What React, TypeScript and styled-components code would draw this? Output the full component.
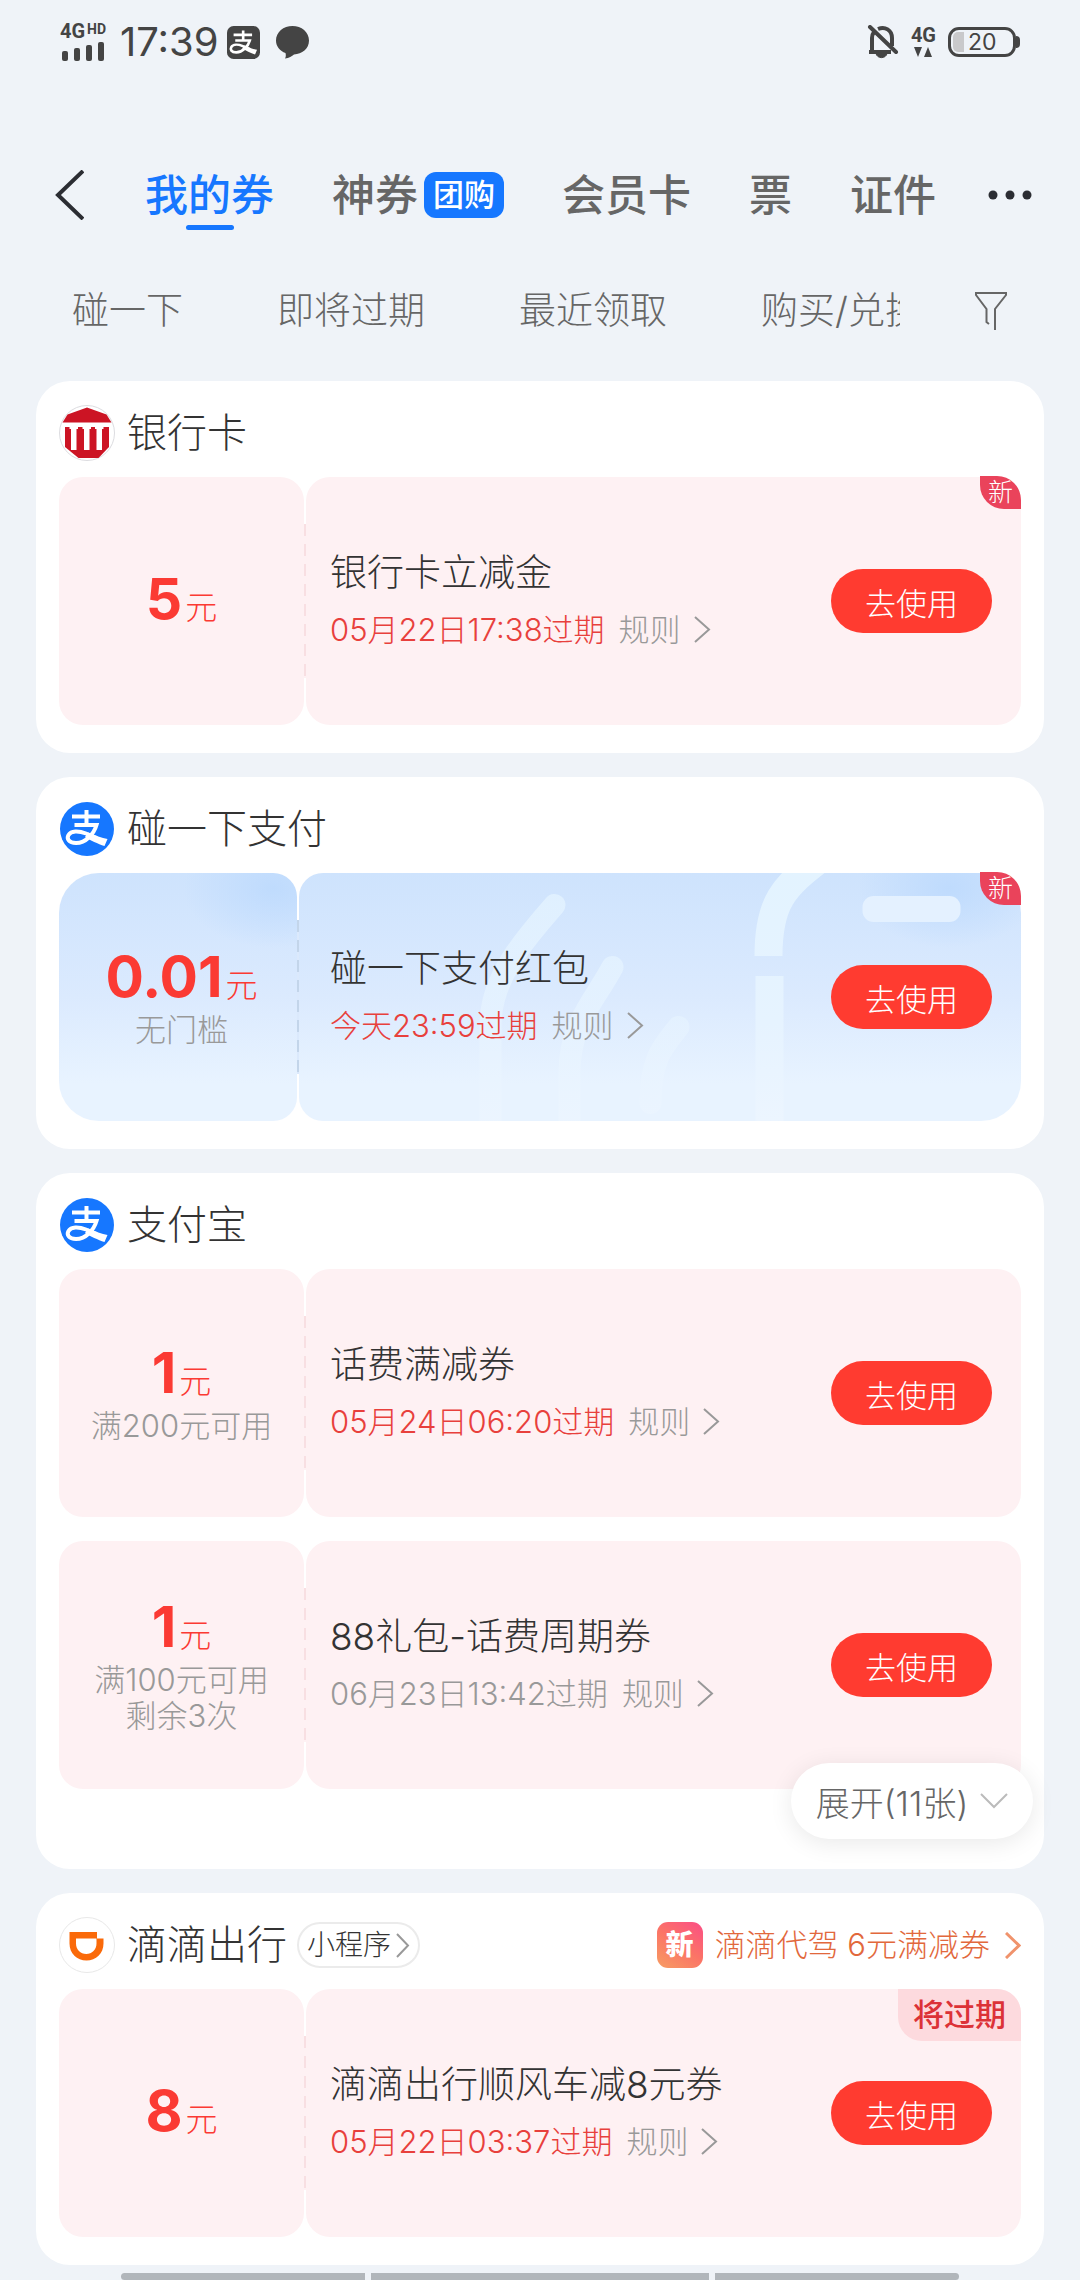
import React from "react";
import styled, { createGlobalStyle } from "styled-components";

const GlobalStyle = createGlobalStyle`
  *, *::before, *::after { box-sizing: border-box; }
  body {
    margin: 0;
    background: #eff3f8;
    color: #333;
    font-family: Inter, "Noto Sans CJK SC", sans-serif;
    font-weight: 300;
  }
  button {
    margin: 0;
    padding: 0;
    border: 0;
    background: none;
    color: inherit;
    font: inherit;
    cursor: pointer;
    white-space: nowrap;
  }
  a { color: inherit; text-decoration: none; }
  h2, h3, p { margin: 0; font-weight: inherit; }
  svg { display: block; flex: none; }
`;

/* ---------- status bar ---------- */

const StatusBar = styled.header`
  display: flex;
  align-items: center;
  justify-content: space-between;
  height: 84px;
  padding: 0 60px;
  color: #444;
`;

const StatusGroup = styled.div`
  display: flex;
  align-items: center;
`;

const Signal = styled.div`
  display: flex;
  flex-direction: column;
  gap: 2px;
  width: 60px;
`;

const NetworkLabel = styled.div`
  display: flex;
  align-items: flex-start;
  font-family: Roboto, sans-serif;
  font-size: 20px;
  font-weight: 700;
  line-height: 16px;
`;

const NetworkSup = styled.span`
  margin-left: 2px;
  font-size: 14px;
  line-height: 12px;
`;

const Clock = styled.time`
  margin-right: 8px;
  font-size: 40px;
  font-weight: 400;
  line-height: 48px;
`;

const AppIcons = styled.div`
  display: flex;
  align-items: center;
  gap: 16px;
`;

const DataNetwork = styled.div`
  display: flex;
  flex-direction: column;
  align-items: center;
  gap: 4px;
  margin: 0 12px;
  font-family: Roboto, sans-serif;
  font-size: 20px;
  font-weight: 700;
  line-height: 16px;
`;

const Battery = styled.div`
  display: flex;
  align-items: center;
`;

const BatteryBody = styled.div`
  display: flex;
  align-items: center;
  gap: 4px;
  width: 68px;
  height: 30px;
  padding: 2px;
  border: 3px solid #444;
  border-radius: 11px;
  font-size: 23px;
  font-weight: 400;
  line-height: 20px;
`;

const BatteryCharge = styled.span`
  width: 11px;
  height: 20px;
  border-radius: 5px 0 0 5px;
  background: #c9c9cb;
`;

const BatteryNub = styled.span`
  width: 4px;
  height: 12px;
  border-radius: 0 4px 4px 0;
  background: #444;
`;

/* ---------- navigation ---------- */

const TopNav = styled.nav`
  display: flex;
  align-items: center;
  justify-content: space-between;
  height: 90px;
  margin-top: 66px;
  padding: 0 48px 0 55px;
`;

const TabList = styled.div`
  display: flex;
  flex: 1;
  gap: 58px;
  margin-left: 61px;
`;

const Tab = styled.button<{ $active?: boolean }>`
  position: relative;
  display: flex;
  align-items: center;
  gap: 6px;
  color: ${(p) => (p.$active ? "#1677ff" : "#666")};
  font-size: 43px;
  font-weight: 500;
  line-height: 64px;

  &::after {
    content: "";
    display: ${(p) => (p.$active ? "block" : "none")};
    position: absolute;
    bottom: -3px;
    left: calc(50% - 24px);
    width: 48px;
    height: 5px;
    border-radius: 3px;
    background: #1677ff;
  }
`;

const TabTag = styled.span`
  padding: 0 9px;
  border-radius: 12px;
  background: #1677ff;
  color: #fff;
  font-size: 31px;
  line-height: 46px;
`;

const FilterBar = styled.div`
  display: flex;
  align-items: center;
  justify-content: space-between;
  height: 80px;
  margin-top: 31px;
  padding: 0 72px;
`;

const FilterList = styled.div`
  display: flex;
  flex: 1;
  gap: 94px;
  margin-right: 74px;
  overflow: hidden;
`;

const FilterItem = styled.button`
  flex: none;
  color: #666;
  font-size: 37px;
  line-height: 56px;
`;

/* ---------- cards ---------- */

const CardList = styled.main`
  display: flex;
  flex-direction: column;
  gap: 24px;
  padding: 30px 36px 8px;
`;

const Card = styled.section<{ $expandable?: boolean }>`
  position: relative;
  display: flex;
  flex-direction: column;
  gap: 24px;
  padding: 24px 23px ${(p) => (p.$expandable ? "80px" : "28px")};
  border-radius: 34px;
  background: #fff;
`;

const CardHeader = styled.div`
  display: flex;
  align-items: center;
  height: 56px;
  margin-bottom: -8px;
`;

const CardTitle = styled.h2`
  margin-left: 12px;
  font-size: 40px;
  line-height: 56px;
`;

const MiniProgram = styled.button`
  display: flex;
  align-items: center;
  gap: 5px;
  height: 46px;
  margin-left: 10px;
  padding: 0 8px;
  border: 2px solid #ebebeb;
  border-radius: 23px;
  font-size: 28px;
  line-height: 40px;
`;

const Promo = styled.a`
  display: flex;
  align-items: center;
  margin-left: auto;
  color: #e2683c;
  font-size: 31px;
  line-height: 46px;
`;

const PromoIcon = styled.span`
  width: 46px;
  margin-right: 12px;
  border-radius: 11px;
  background: linear-gradient(215deg, #fb4d86, #fb7466 50%, #f79d63);
  color: #fff;
  font-size: 28px;
  font-weight: 900;
  text-align: center;
`;

const PromoText = styled.span`
  margin-right: 15px;
`;

const CouponRow = styled.article`
  position: relative;
  display: flex;
  height: 248px;
`;

const pinkFill = "#fef1f3";
const blueFill = "linear-gradient(180deg, #cee3fd 0%, #dbeafe 50%, #e8f3ff 85%)";
const blueGlow =
  "radial-gradient(ellipse 90px 60px at 90% 6%, #bfdbfd 0%, rgba(191, 219, 253, 0) 100%)";

const ValuePanel = styled.div<{ $blue?: boolean }>`
  display: flex;
  flex: none;
  flex-direction: column;
  align-items: center;
  justify-content: center;
  width: ${(p) => (p.$blue ? "238px" : "245px")};
  padding-left: ${(p) => (p.$blue ? "7px" : "0")};
  border-radius: ${(p) => (p.$blue ? "40px 24px 24px 40px" : "24px")};
  background: ${(p) => (p.$blue ? `${blueGlow}, ${blueFill}` : pinkFill)};
`;

const Amount = styled.p`
  display: flex;
  align-items: baseline;
  gap: 3px;
  height: 66px;
  color: #fb3a33;
  font-family: "Liberation Sans Narrow", Inter, sans-serif;
  font-size: 57px;
  font-weight: 700;
  line-height: 62px;
`;

const Unit = styled.span`
  font-family: "Noto Sans CJK SC", sans-serif;
  font-size: 32px;
  font-weight: 300;
  line-height: 40px;
`;

const Condition = styled.p`
  color: #999;
  font-size: 31px;
  line-height: 36px;
`;

const Divider = styled.div<{ $blue?: boolean }>`
  align-self: center;
  width: 2px;
  height: 154px;
  background: repeating-linear-gradient(
    180deg,
    ${(p) => (p.$blue ? "#c3d5ea" : "#f8dfe2")} 0 12px,
    ${(p) => (p.$blue ? "#dbe9fc" : "#fef1f3")} 12px 20px
  );
`;

const DetailPanel = styled.div<{ $blue?: boolean }>`
  position: relative;
  display: flex;
  flex: 1;
  align-items: center;
  justify-content: space-between;
  padding: 0 29px 0 ${(p) => (p.$blue ? "31px" : "24px")};
  overflow: hidden;
  border-radius: ${(p) => (p.$blue ? "24px 40px 40px 24px" : "24px")};
  background: ${(p) => (p.$blue ? `${blueGlow}, ${blueFill}` : pinkFill)};
`;

const Pattern = styled.svg`
  position: absolute;
  inset: 0;
  width: 100%;
  height: 100%;
`;

const Details = styled.div`
  position: relative;
  display: flex;
  flex-direction: column;
  gap: 9px;
`;

const CouponTitle = styled.h3`
  font-size: 37px;
  line-height: 48px;
`;

const ExpiryLine = styled.div`
  display: flex;
  align-items: center;
  gap: 14px;
  font-size: 31px;
  line-height: 48px;
`;

const Expiry = styled.span<{ $muted?: boolean }>`
  color: ${(p) => (p.$muted ? "#999" : "#e8403c")};
`;

const Rules = styled.button`
  display: flex;
  align-items: center;
  gap: 13px;
  color: #999;
`;

const UseButton = styled.button`
  position: relative;
  width: 161px;
  height: 64px;
  border-radius: 32px;
  background: #ff3b30;
  color: #fff;
  font-size: 31px;
`;

const NewBadge = styled.span`
  position: absolute;
  top: -1px;
  right: 0;
  width: 41px;
  border-radius: 0 24px 0 24px;
  background: #ea435b;
  color: #fff;
  font-size: 25px;
  line-height: 33px;
  text-align: center;
`;

const ExpiringBadge = styled.span`
  position: absolute;
  top: 0;
  right: 0;
  padding: 0 15px;
  border-radius: 0 24px 0 24px;
  background: #fddade;
  color: #dc3237;
  font-size: 31px;
  font-weight: 500;
  line-height: 52px;
`;

const ExpandButton = styled.button`
  position: absolute;
  right: 11px;
  bottom: 30px;
  display: flex;
  align-items: center;
  justify-content: center;
  gap: 12px;
  width: 242px;
  height: 76px;
  border-radius: 38px;
  background: #fff;
  box-shadow: 0 4px 24px rgba(0, 0, 0, 0.09);
  color: #666;
  font-size: 34px;
`;

/* ---------- gesture bar ---------- */

const GestureBar = styled.footer`
  display: grid;
  grid-template-columns: 244fr 338fr 244fr;
  gap: 6px;
  padding: 0 121px;
`;

const GestureSegment = styled.span<{ $side?: "left" | "right" }>`
  height: 7px;
  border-radius: ${(p) =>
    p.$side === "left" ? "4px 0 0 4px" : p.$side === "right" ? "0 4px 4px 0" : "0"};
  background: #b1b6bb;
`;

/* ---------- drawings ---------- */

function ChevronRight({ width = 15, height = 27, color = "currentColor", stroke = 2 }) {
  return (
    <svg width={width} height={height} fill="none" stroke={color} strokeWidth={stroke} aria-hidden>
      <path d={`M1 1 L${width - 2} ${height / 2} L1 ${height - 1}`} />
    </svg>
  );
}

function AlipayMark() {
  return (
    <>
      <path
        d="M13 15.5H41M27.5 9V24M15.5 24H37.5C35 32.5 27 42 17 42C9.5 42 7.5 37.5 9.5 34C12 29.5 19.500 29.500 27 32.5L38 37"
        fill="none"
        stroke="#fff"
        strokeWidth="4"
      />
      <path d="M29 31.500C36 34.500 43 37 48.500 38L45.500 45C39 43 31 39 26 36Z" fill="#fff" />
    </>
  );
}

function AlipayLogo() {
  return (
    <svg width="56" height="56" viewBox="0 0 56 56" aria-hidden>
      <circle cx="28" cy="28" r="27" fill="#1677ff" />
      <AlipayMark />
    </svg>
  );
}

function BankLogo() {
  return (
    <svg width="56" height="56" viewBox="0 0 56 56" aria-hidden>
      <circle cx="28" cy="28" r="27.5" fill="#fff" stroke="#dcdce0" />
      <path d="M28 2.500L47.500 9.500L52.500 17.500H3.500L8.500 9.500Z" fill="#cc1424" />
      <path d="M6 22H50V42L39.500 53H19.500L6 42Z" fill="#cc1424" />
      <path
        d="M10.500 22h8.500v2h-1.500V45h-5.500V24h-1.500zM23.500 22h8.500v2h-1.500V45h-5.500V24h-1.500zM36 22h8.500v2h-1.500V45h-5.500V24h-1.500z"
        fill="#fff"
      />
    </svg>
  );
}

function DidiLogo() {
  return (
    <svg width="56" height="56" viewBox="0 0 56 56" aria-hidden>
      <circle cx="28" cy="28" r="27.500" fill="#fff" stroke="#e8e8e8" />
      <path
        fillRule="evenodd"
        fill="#fa6a0a"
        d="M10.500 15H38V21.500H44.500V26.500C44.500 36.500 37 43.500 27.500 43.500C18 43.500 10.500 36.500 10.500 26.500ZM17 21.500V26.500C17 32.500 21.500 37 27.250 37C33 37 37.500 32.500 37.500 26.500V21.500Z"
      />
    </svg>
  );
}

function TapPattern() {
  return (
    <Pattern viewBox="0 0 723 248" preserveAspectRatio="xMidYMid slice" aria-hidden>
      <defs>
        <linearGradient id="wave" gradientUnits="userSpaceOnUse" x1="0" y1="0" x2="0" y2="248">
          <stop offset="0" stopColor="#e3f3ff" />
          <stop offset="0.600" stopColor="#e6f3ff" />
          <stop offset="1" stopColor="#ecf5ff" />
        </linearGradient>
      </defs>
      <g fill="none" stroke="url(#wave)" strokeLinecap="round" strokeWidth="22">
        <path d="M256 32C228 64 192 104 192 152V270" opacity="0.800" />
        <path d="M314 94C296 128 271 150 271 200V270" opacity="0.800" />
        <path d="M380 154C366 172 352 184 352 230" opacity="0.700" />
      </g>
      <g fill="none" stroke="url(#wave)" strokeWidth="28">
        <path d="M524 -16C484 14 470 30 470 83" />
        <path d="M471 103V260" />
      </g>
      <rect x="564" y="23" width="98" height="26" rx="11" fill="#e4f1ff" />
    </Pattern>
  );
}

/* ---------- content ---------- */

interface Coupon {
  value: string;
  conditions?: string[];
  title: string;
  expiry: string;
  muted?: boolean;
  badge?: "new" | "expiring";
  blue?: boolean;
}

function CouponItem({ value, conditions = [], title, expiry, muted, badge, blue }: Coupon) {
  return (
    <CouponRow>
      <ValuePanel $blue={blue}>
        <Amount>
          {value}
          <Unit>元</Unit>
        </Amount>
        {conditions.map((text) => (
          <Condition key={text}>{text}</Condition>
        ))}
      </ValuePanel>
      <Divider $blue={blue} />
      <DetailPanel $blue={blue}>
        {blue && <TapPattern />}
        <Details>
          <CouponTitle>{title}</CouponTitle>
          <ExpiryLine>
            <Expiry $muted={muted}>{expiry}</Expiry>
            <Rules type="button">
              规则
              <ChevronRight width={17} />
            </Rules>
          </ExpiryLine>
        </Details>
        <UseButton type="button">去使用</UseButton>
      </DetailPanel>
      {badge === "new" && <NewBadge>新</NewBadge>}
      {badge === "expiring" && <ExpiringBadge>将过期</ExpiringBadge>}
    </CouponRow>
  );
}

const filters = ["碰一下", "即将过期", "最近领取", "购买/兑换"];

export default function App() {
  return (
    <>
      <GlobalStyle />
      <StatusBar>
        <StatusGroup>
          <Signal>
            <NetworkLabel>
              4G<NetworkSup>HD</NetworkSup>
            </NetworkLabel>
            <svg width="46" height="20" fill="#444" aria-hidden>
              <rect x="2" y="10" width="6" height="10" rx="2" />
              <rect x="14" y="7" width="6" height="13" rx="2" />
              <rect x="26" y="4" width="6" height="16" rx="2" />
              <rect x="38" y="1" width="6" height="19" rx="2" />
            </svg>
          </Signal>
          <Clock>17:39</Clock>
          <AppIcons>
            <svg width="33" height="33" viewBox="3 2 50 50" aria-hidden>
              <rect x="3" y="2" width="50" height="50" rx="10" fill="#444" />
              <AlipayMark />
            </svg>
            <svg width="33" height="33" viewBox="0 0 33 33" fill="#444" aria-hidden>
              <path d="M16.500 0C25.500 0 33 6 33 14.500S26 28 18 28.500C16 30 13 32 9 32.500C10 31 10 29 9.500 27C4 25 0 20.500 0 14.500C0 6 7.500 0 16.500 0Z" />
            </svg>
          </AppIcons>
        </StatusGroup>
        <StatusGroup>
          <svg width="32" height="34" viewBox="0 0 32 34" fill="none" stroke="#444" strokeWidth="4" aria-hidden>
            <path d="M5 27V13C5 11 5.500 9 7 7M11 4C18 1 25 5 25 13V21M2 27H24" />
            <path d="M9 28.500C10 34 19 34 20 28.500Z" fill="#444" strokeWidth="1" />
            <path d="M3 2L29 27" strokeLinecap="round" />
          </svg>
          <DataNetwork>
            4G
            <svg width="18" height="10" fill="#444" aria-hidden>
              <path d="M0 0H8L4 10ZM10 10H18L14 0Z" />
            </svg>
          </DataNetwork>
          <Battery>
            <BatteryBody>
              <BatteryCharge />
              20
            </BatteryBody>
            <BatteryNub />
          </Battery>
        </StatusGroup>
      </StatusBar>

      <TopNav>
        <button type="button" aria-label="返回">
          <svg width="29" height="50" fill="none" stroke="#2b2d33" strokeWidth="4" aria-hidden>
            <path d="M28 1L3 25L28 49" />
          </svg>
        </button>
        <TabList>
          <Tab type="button" $active>
            我的券
          </Tab>
          <Tab type="button">
            神券<TabTag>团购</TabTag>
          </Tab>
          <Tab type="button">会员卡</Tab>
          <Tab type="button">票</Tab>
          <Tab type="button">证件</Tab>
        </TabList>
        <button type="button" aria-label="更多">
          <svg width="44" height="10" fill="#2b2d33" aria-hidden>
            <circle cx="5" cy="5" r="4.500" />
            <circle cx="22" cy="5" r="4.500" />
            <circle cx="39" cy="5" r="4.500" />
          </svg>
        </button>
      </TopNav>

      <FilterBar>
        <FilterList>
          {filters.map((name) => (
            <FilterItem type="button" key={name}>
              {name}
            </FilterItem>
          ))}
        </FilterList>
        <button type="button" aria-label="筛选">
          <svg width="34" height="40" fill="none" stroke="#666" strokeWidth="2" aria-hidden>
            <path d="M15 33L12.500 31V18L2 4V2H32V4L21 18V39" />
          </svg>
        </button>
      </FilterBar>

      <CardList>
        <Card>
          <CardHeader>
            <BankLogo />
            <CardTitle>银行卡</CardTitle>
          </CardHeader>
          <CouponItem value="5" title="银行卡立减金" expiry="05月22日17:38过期" badge="new" />
        </Card>

        <Card>
          <CardHeader>
            <AlipayLogo />
            <CardTitle>碰一下支付</CardTitle>
          </CardHeader>
          <CouponItem
            blue
            value="0.01"
            conditions={["无门槛"]}
            title="碰一下支付红包"
            expiry="今天23:59过期"
            badge="new"
          />
        </Card>

        <Card $expandable>
          <CardHeader>
            <AlipayLogo />
            <CardTitle>支付宝</CardTitle>
          </CardHeader>
          <CouponItem
            value="1"
            conditions={["满200元可用"]}
            title="话费满减券"
            expiry="05月24日06:20过期"
          />
          <CouponItem
            muted
            value="1"
            conditions={["满100元可用", "剩余3次"]}
            title="88礼包-话费周期券"
            expiry="06月23日13:42过期"
          />
          <ExpandButton type="button">
            展开(11张)
            <svg width="28" height="16" fill="none" stroke="#bbb" strokeWidth="2" aria-hidden>
              <path d="M1 1L14 14L27 1" />
            </svg>
          </ExpandButton>
        </Card>

        <Card>
          <CardHeader>
            <DidiLogo />
            <CardTitle>滴滴出行</CardTitle>
            <MiniProgram type="button">
              小程序
              <ChevronRight width={14} height={25} color="#999" />
            </MiniProgram>
            <Promo href="#">
              <PromoIcon>新</PromoIcon>
              <PromoText>滴滴代驾 6元满减券</PromoText>
              <ChevronRight width={16} color="#f0936c" stroke={3} />
            </Promo>
          </CardHeader>
          <CouponItem
            value="8"
            title="滴滴出行顺风车减8元券"
            expiry="05月22日03:37过期"
            badge="expiring"
          />
        </Card>
      </CardList>

      <GestureBar>
        <GestureSegment $side="left" />
        <GestureSegment />
        <GestureSegment $side="right" />
      </GestureBar>
    </>
  );
}
